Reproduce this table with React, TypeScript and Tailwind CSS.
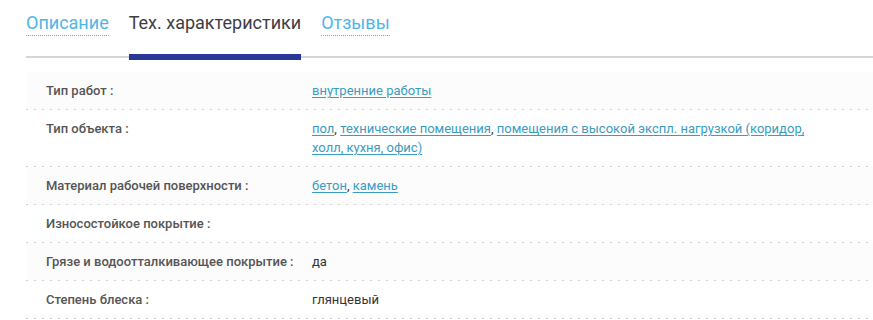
const rows: { label: string; value: React.ReactNode }[] = [
  {
    label: "Тип работ :",
    value: <a href="#" className="text-[#3a9cc0] underline underline-offset-2">внутренние работы</a>,
  },
  {
    label: "Тип объекта :",
    value: (
      <>
        <a href="#" className="text-[#3a9cc0] underline underline-offset-2">пол</a>,{" "}
        <a href="#" className="text-[#3a9cc0] underline underline-offset-2">технические помещения</a>,{" "}
        <a href="#" className="text-[#3a9cc0] underline underline-offset-2">
          помещения с высокой экспл. нагрузкой (коридор, холл, кухня, офис)
        </a>
      </>
    ),
  },
  {
    label: "Материал рабочей поверхности :",
    value: (
      <>
        <a href="#" className="text-[#3a9cc0] underline underline-offset-2">бетон</a>,{" "}
        <a href="#" className="text-[#3a9cc0] underline underline-offset-2">камень</a>
      </>
    ),
  },
  { label: "Износостойкое покрытие :", value: null },
  { label: "Грязе и водоотталкивающее покрытие :", value: "да" },
  { label: "Степень блеска :", value: "глянцевый" },
];

export default function App() {
  return (
    <div className="w-[873px] h-[320px] overflow-hidden bg-white pl-[26px] font-['Roboto',sans-serif]">
      <div className="flex gap-5 border-b-2 border-[#d6d6d6] h-[58px] items-start pt-[11px]">
        <a href="#" className="text-[18px] leading-[24px] text-[#4db6e8] border-b border-dotted border-[#4db6e8]">
          Описание
        </a>
        <div className="relative h-[47px] text-[18px] leading-[24px] text-[#3d3d45]">
          Тех. характеристики
          <div className="absolute left-0 right-0 bottom-[-2px] h-[6px] bg-[#29369a]" />
        </div>
        <a href="#" className="text-[18px] leading-[24px] text-[#4db6e8] border-b border-dotted border-[#4db6e8]">
          Отзывы
        </a>
      </div>

      <div className="mt-[14px]">
        {rows.map((r, i) => (
          <div key={i} className={i % 2 === 0 ? "bg-[#fcfcfc]" : "bg-white"}>
            <div className="flex py-[9px] pl-5 text-[13px] leading-[19px]">
              <div className="w-[266px] shrink-0 font-medium text-[#555]">{r.label}</div>
              <div className="w-[500px] text-[#333]">{r.value}</div>
            </div>
            <div className="h-px bg-[repeating-linear-gradient(to_right,#cfcfcf_0_2px,transparent_2px_8px)]" />
          </div>
        ))}
      </div>
    </div>
  );
}
